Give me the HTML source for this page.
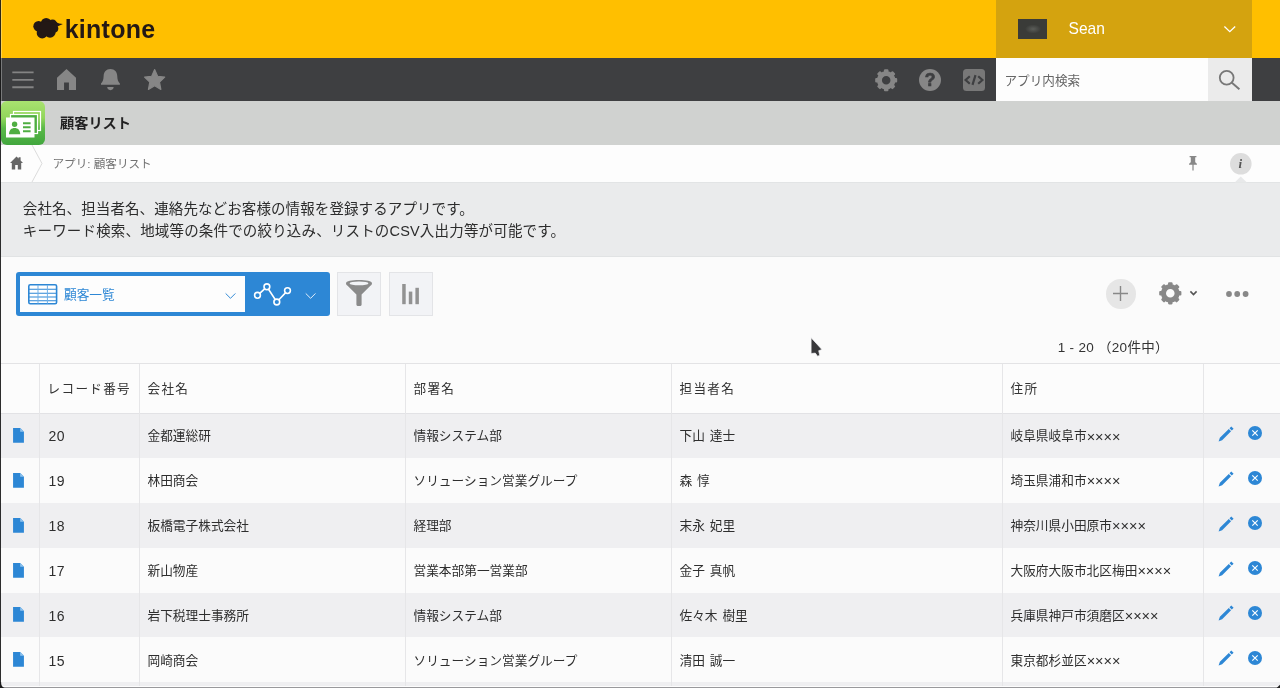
<!DOCTYPE html>
<html lang="ja">
<head>
<meta charset="utf-8">
<title>顧客リスト - kintone</title>
<style>
*{box-sizing:border-box;margin:0;padding:0}
html,body{width:1280px;height:688px;overflow:hidden;background:#fbfbfb}
body{position:relative;font-family:"Liberation Sans","Noto Sans CJK JP",sans-serif;color:#333;font-size:14px}
.abs{position:absolute}
svg{position:absolute;display:block;overflow:visible}
#hdr{left:0;top:0;width:1280px;height:58px;background:#ffbf00}
#user{left:996px;top:0;width:256px;height:58px;background:#d4a30f}
#avatar{left:1018px;top:19px;width:28.7px;height:19.5px;background:radial-gradient(ellipse 8px 4.5px at 52% 50%,#5b5d59 0,#3a3b38 100%)}
#nav{left:0;top:58px;width:1280px;height:43px;background:#3e3f41}
#search{left:996px;top:58px;width:212px;height:43px;background:#fdfdfd}
#sbtn{left:1208px;top:58px;width:44px;height:43px;background:#ebebeb}
#appbar{left:0;top:101px;width:1280px;height:44px;background:#d0d2d0}
#crumb{left:0;top:145px;width:1280px;height:37px;background:#fdfdfd}
#desc{left:0;top:182px;width:1280px;height:75px;background:#eaebec;border-top:1px solid #e2e4e5;border-bottom:1px solid #e1e3e4}
.t{position:absolute;white-space:nowrap;line-height:20px}
#appicon{left:1px;top:101px;width:44px;height:44px;border-radius:6px;background:linear-gradient(180deg,#a9e270 0%,#92d65c 38%,#5ab948 62%,#41a63d 100%)}
#viewsel{left:16px;top:272px;width:314px;height:44px;background:#2d87d5;border-radius:3px}
#viewin{left:20px;top:276px;width:225px;height:35.5px;background:#fdfdfd}
.btn{position:absolute;top:272px;width:44px;height:43.5px;background:#f2f3f6;border:1px solid #e3e4e7}
#plus{left:1106px;top:279px;width:29.5px;height:29.5px;border-radius:50%;background:#e6e6e6}
#thead{left:0;top:363px;width:1280px;height:50px;border-top:1px solid #e3e3e5;background:#fcfcfc}
.th{position:absolute;top:379px;font-size:12.6px;letter-spacing:1.3px;line-height:20px;color:#333;white-space:nowrap}
.row{position:absolute;left:0;width:1280px;height:44.9px;background:#fbfbfb}
.row.g{background:#efeff1}
.c{position:absolute;top:13px;line-height:20px;font-size:12.7px;color:#2e2e2e;white-space:nowrap}
.c1{left:48.4px;font-size:14px;top:13.3px;letter-spacing:.6px}
.c2{left:147.5px}.c3{left:413.5px}.c4{left:679.5px}.c5{left:1010.5px}
.x{font-size:14.5px;line-height:10px;position:relative;top:1.6px}
.c4{word-spacing:1.3px}
.fi{left:12.8px;top:14.9px;width:11px;height:14.8px}
.pen{left:1218px;top:12.85px;width:16px;height:16px}
.del{left:1248px;top:13.2px;width:14px;height:14px}
.vl{position:absolute;top:364px;width:1px;height:324px;background:#e6e6e8}
#app{position:absolute;left:0;top:0;width:1280px;height:688px;will-change:transform}
</style>
</head>
<body>
<div id="app">
<div id="hdr" class="abs"></div>
<div id="user" class="abs"></div>
<div id="avatar" class="abs"></div>
<div id="nav" class="abs"></div>
<div id="search" class="abs"></div>
<div id="sbtn" class="abs"></div>
<div id="appbar" class="abs"></div>
<div id="crumb" class="abs"></div>
<div id="desc" class="abs"></div>

<!-- logo cloud -->
<svg id="cloud" style="left:33px;top:17px;width:30px;height:22px" viewBox="33 17 30 22"><g fill="#231815"><circle cx="38.6" cy="26.3" r="5.3"/><circle cx="46.2" cy="23.3" r="5.4"/><circle cx="52.6" cy="24.2" r="4.6"/><circle cx="42.2" cy="32.9" r="5.5"/><circle cx="50" cy="32" r="5.7"/><circle cx="46.3" cy="28.3" r="7"/><circle cx="54.2" cy="28.6" r="4.1"/><path d="M55.6 21.6C58 23.4 60.4 24 62.9 24L57.4 26.6Z"/></g></svg>
<div class="t" id="logo" style="left:64.7px;top:13.5px;font-size:25px;line-height:30px;font-weight:bold;color:#231815;letter-spacing:0.25px;transform:scaleY(1.06);transform-origin:0 24px">kintone</div>
<div class="t" id="uname" style="left:1068.5px;top:18.5px;font-size:15.6px;color:#fff;transform:scaleY(1.1);transform-origin:0 15.5px">Sean</div>
<svg style="left:1224px;top:25.6px;width:11.6px;height:6.4px" viewBox="0 0 11.6 6.4"><path d="M0.4 0.5L5.8 5.7L11.2 0.5" stroke="#fff" stroke-width="1.3" fill="none"/></svg>

<!-- nav icons -->
<svg style="left:12px;top:71px;width:22px;height:18px" viewBox="0 0 22 18"><path d="M0.3 1.4H21.6M0.3 8.9H21.6M0.3 16.2H21.6" stroke="#848484" stroke-width="1.9" fill="none"/></svg>
<svg style="left:57.2px;top:68.8px;width:19px;height:20.9px" viewBox="0 0 21 21.5" preserveAspectRatio="none"><path d="M10.5 0L21 9V21.5H13.2V14H7.8V21.5H0V9Z" fill="#868686"/></svg>
<svg style="left:101px;top:68.9px;width:18.9px;height:21.2px" viewBox="0 0 20 22" preserveAspectRatio="none"><path d="M10 0C14.6 0 17 3 17.2 7.2C17.4 11 18 13.2 20 15V16.4H0V15C2 13.2 2.600 11 2.800 7.200C3 3 5.400 0 10 0Z M6.600 18.800H13.400C13.400 20.600 12 22 10 22C8 22 6.600 20.600 6.600 18.800Z" fill="#868686"/></svg>
<svg style="left:144px;top:69px;width:21.3px;height:21px" viewBox="-0.25 -0.20 22.50 21.46" preserveAspectRatio="none"><path d="M11.00 0.40L14.17 7.23L21.65 8.14L16.14 13.27L17.58 20.66L11.00 17.00L4.42 20.66L5.86 13.27L0.35 8.14L7.83 7.23Z" fill="#868686" stroke="#868686" stroke-width="1.2" stroke-linejoin="round"/></svg>

<!-- nav right icons -->
<svg id="gear1" style="left:874.8px;top:68.6px;width:22.4px;height:22.4px" viewBox="-12 -12 24 24"><g fill="#868686"><path fill-rule="evenodd" d="M0 -9.9A9.9 9.9 0 1 1 0 9.9A9.9 9.9 0 1 1 0 -9.9ZM0 -4.55A4.55 4.55 0 1 0 0 4.55A4.55 4.55 0 1 0 0 -4.55Z"/><rect transform="rotate(0)" x="-2.4" y="-11.8" width="4.8" height="4" rx="1.1"/><rect transform="rotate(45)" x="-2.4" y="-11.8" width="4.8" height="4" rx="1.1"/><rect transform="rotate(90)" x="-2.4" y="-11.8" width="4.8" height="4" rx="1.1"/><rect transform="rotate(135)" x="-2.4" y="-11.8" width="4.8" height="4" rx="1.1"/><rect transform="rotate(180)" x="-2.4" y="-11.8" width="4.8" height="4" rx="1.1"/><rect transform="rotate(225)" x="-2.4" y="-11.8" width="4.8" height="4" rx="1.1"/><rect transform="rotate(270)" x="-2.4" y="-11.8" width="4.8" height="4" rx="1.1"/><rect transform="rotate(315)" x="-2.4" y="-11.8" width="4.8" height="4" rx="1.1"/></g></svg>
<svg style="left:919px;top:68.8px;width:22px;height:22px" viewBox="0 0 22 22"><circle cx="11" cy="11" r="11" fill="#868686"/><text x="11" y="17.3" text-anchor="middle" style="font:bold 17.5px 'Liberation Sans',sans-serif" fill="#3e3f41" stroke="#3e3f41" stroke-width="0.7">?</text></svg>
<svg style="left:963px;top:69px;width:22px;height:22px" viewBox="0 0 22 22"><rect width="22" height="22" rx="3.5" fill="#787878"/><path d="M6.8 7.2L2.6 11L6.8 14.8M15.2 7.2L19.4 11L15.2 14.8M12.5 6.2L9.5 15.8" stroke="#3e3f41" stroke-width="2.2" fill="none"/></svg>

<div class="t" id="sph" style="left:1004.5px;top:70.6px;font-size:12.6px;color:#666">アプリ内検索</div>
<svg style="left:1218px;top:69px;width:23px;height:22px" viewBox="0 0 23 22"><circle cx="8.7" cy="8.7" r="6.9" stroke="#777" stroke-width="1.8" fill="none"/><path d="M13.6 13.6L21.4 20.2" stroke="#777" stroke-width="2" fill="none"/></svg>

<!-- app bar -->
<div id="appicon" class="abs"></div>
<svg style="left:1px;top:102.6px;width:44px;height:44px" viewBox="0 0 44 44">
<rect x="12.5" y="8.5" width="27" height="19" fill="none" stroke="#fff" stroke-width="1.2"/>
<rect x="9.5" y="11.5" width="27" height="19" fill="#4fae42" stroke="#fff" stroke-width="1.2"/>
<rect x="5" y="14.5" width="28.5" height="20" fill="#fff"/>
<circle cx="13.6" cy="21.2" r="2.7" fill="#4fae42"/>
<path d="M8 31.2C8 27 10.4 25 13.6 25C16.8 25 19.2 27 19.2 31.2Z" fill="#4fae42"/>
<path d="M22 20.2H29.6M22 24.2H29.6M22 28.2H29.6" stroke="#4fae42" stroke-width="1.9" fill="none"/>
</svg>
<div class="t" id="apptitle" style="left:60px;top:113px;font-size:14.2px;font-weight:bold;color:#222">顧客リスト</div>

<!-- breadcrumb -->
<svg style="left:9.5px;top:156.1px;width:13px;height:14px" viewBox="0 0 13 14"><path d="M6.5 0.5L8.6 2.6V1.2H10.6V4.6L13 7H11.2V13.6H7.8V9H5.2V13.6H1.8V7H0Z" fill="#666"/></svg>
<svg style="left:30px;top:145px;width:13px;height:37px" viewBox="0 0 13 37"><path d="M2 0L12 18.5L2 37" stroke="#dcdcdc" stroke-width="1" fill="none"/></svg>
<div class="t" id="crumbt" style="left:52.5px;top:153.9px;font-size:11.6px;color:#727272">アプリ: 顧客リスト</div>
<svg style="left:1189px;top:156.4px;width:8px;height:14.5px" viewBox="0 0 8 14.5"><path d="M0.6 0H7.4V1.2H6.2V6.2C7.2 6.6 8 7.6 8 8.8H4.6V14.5H3.4V8.8H0C0 7.6 0.8 6.6 1.8 6.2V1.2H0.6Z" fill="#888"/></svg>
<svg style="left:1230px;top:152.8px;width:21.6px;height:30px" viewBox="0 0 21.6 30"><circle cx="10.8" cy="10.8" r="10.8" fill="#dddddd"/><path d="M10.8 23.4L17 29.4H4.6Z" fill="#e8e9ea"/><text x="10.4" y="14.8" text-anchor="middle" style="font:italic bold 13px 'Liberation Serif',serif" fill="#555">i</text></svg>

<!-- description -->
<div class="t" id="d1" style="left:22.8px;top:198.5px;font-size:14.5px;letter-spacing:.1px;color:#2c2c2c">会社名、担当者名、連絡先などお客様の情報を登録するアプリです。</div>
<div class="t" id="d2" style="left:22.8px;top:221px;font-size:14.5px;letter-spacing:.17px;color:#2c2c2c">キーワード検索、地域等の条件での絞り込み、リストのCSV入出力等が可能です。</div>

<!-- toolbar -->
<div id="viewsel" class="abs"></div>
<div id="viewin" class="abs"></div>
<svg style="left:27.8px;top:284.4px;width:29.4px;height:20.6px" viewBox="0 0 29.4 20.6"><rect x="0.8" y="0.8" width="27.8" height="19" rx="1.5" fill="#fff" stroke="#2d87d5" stroke-width="1.6"/><path d="M1 5.2H28.4M1 9.2H28.4M1 13H28.4M1 16.8H28.4" stroke="#2d87d5" stroke-width="1.1" fill="none"/><path d="M10 1V19.6M19.4 1V19.6" stroke="#6fb0e8" stroke-width="1" fill="none"/></svg>
<div class="t" id="vname" style="left:64px;top:285px;font-size:12.7px;color:#2d87d5">顧客一覧</div>
<svg style="left:225px;top:292.6px;width:11px;height:6.2px" viewBox="0 0 12 7"><path d="M0.5 0.5L6 6L11.5 0.5" stroke="#2d87d5" stroke-width="1.1" fill="none"/></svg>
<svg style="left:253px;top:282px;width:40px;height:25px" viewBox="253 282 40 25"><path d="M257.5 295.3L266.9 286.8L276.8 302L287.5 290.6" stroke="#fff" stroke-width="1.6" fill="none"/><g fill="#2d87d5" stroke="#fff" stroke-width="1.6"><circle cx="257.5" cy="295.3" r="2.9"/><circle cx="266.9" cy="286.8" r="2.9"/><circle cx="276.8" cy="302" r="2.9"/><circle cx="287.5" cy="290.6" r="2.9"/></g></svg>
<svg style="left:305.3px;top:292.6px;width:11.2px;height:6.2px" viewBox="0 0 12 7"><path d="M0.5 0.5L6 6L11.5 0.5" stroke="#e8f2fb" stroke-width="1.1" fill="none"/></svg>
<div class="btn" style="left:337px"></div>
<div class="btn" style="left:388.5px"></div>
<svg style="left:346px;top:279.6px;width:26px;height:26px" viewBox="0 0 26 26"><path d="M0 3.2C0 1.2 5.8 0 13 0C20.2 0 26 1.2 26 3.2C26 4.2 25.4 5 24.4 5.8L15.6 14.6V24.4C15.6 25.4 14.6 26 13.6 26H12.4C11.4 26 10.4 25.4 10.4 24.4V14.6L1.6 5.8C0.6 5 0 4.2 0 3.2Z" fill="#8a8a8a"/><ellipse cx="13" cy="3.4" rx="9.4" ry="1.9" fill="#f2f3f6"/></svg>
<svg style="left:402px;top:283.6px;width:17px;height:20.2px" viewBox="0 0 17 20.2"><rect x="0.2" y="0" width="3.5" height="20.2" fill="#929292"/><rect x="6.8" y="7.6" width="3.5" height="12.6" fill="#929292"/><rect x="13.4" y="3.8" width="3.5" height="16.4" fill="#929292"/></svg>

<div id="plus" class="abs"></div>
<svg style="left:1113px;top:286.2px;width:15px;height:15px" viewBox="0 0 15 15"><path d="M7.5 0V15M0 7.5H15" stroke="#888" stroke-width="1.4" fill="none"/></svg>
<svg id="gear2" style="left:1159px;top:282px;width:22.6px;height:22.6px" viewBox="-12 -12 24 24"><g fill="#888"><path fill-rule="evenodd" d="M0 -9.9A9.9 9.9 0 1 1 0 9.9A9.9 9.9 0 1 1 0 -9.9ZM0 -4.55A4.55 4.55 0 1 0 0 4.55A4.55 4.55 0 1 0 0 -4.55Z"/><rect transform="rotate(0)" x="-2.4" y="-11.8" width="4.8" height="4" rx="1.1"/><rect transform="rotate(45)" x="-2.4" y="-11.8" width="4.8" height="4" rx="1.1"/><rect transform="rotate(90)" x="-2.4" y="-11.8" width="4.8" height="4" rx="1.1"/><rect transform="rotate(135)" x="-2.4" y="-11.8" width="4.8" height="4" rx="1.1"/><rect transform="rotate(180)" x="-2.4" y="-11.8" width="4.8" height="4" rx="1.1"/><rect transform="rotate(225)" x="-2.4" y="-11.8" width="4.8" height="4" rx="1.1"/><rect transform="rotate(270)" x="-2.4" y="-11.8" width="4.8" height="4" rx="1.1"/><rect transform="rotate(315)" x="-2.4" y="-11.8" width="4.8" height="4" rx="1.1"/></g></svg>
<svg style="left:1189.8px;top:291.3px;width:7px;height:4.4px" viewBox="0 0 7 4.4"><path d="M0.4 0.4L3.5 3.6L6.6 0.4" stroke="#555" stroke-width="1.6" fill="none"/></svg>
<svg style="left:1225.8px;top:290.8px;width:23px;height:6px" viewBox="0 0 23 6"><circle cx="3" cy="3" r="2.9" fill="#888"/><circle cx="11.2" cy="3" r="2.9" fill="#888"/><circle cx="19.6" cy="3" r="2.9" fill="#888"/></svg>
<div class="t" id="pager" style="left:1057.8px;top:337.5px;font-size:13.5px;letter-spacing:0.28px;color:#333">1 - 20 （20件中）</div>

<!-- table header -->
<div id="thead" class="abs"></div>
<div class="th" style="left:47.6px">レコード番号</div>
<div class="th" style="left:147.5px">会社名</div>
<div class="th" style="left:413.5px">部署名</div>
<div class="th" style="left:679.5px">担当者名</div>
<div class="th" style="left:1010.5px">住所</div>
<div id="tbl">
<div class="row g" style="top:413.0px"><svg class="fi" viewBox="0 0 11 15"><path d="M0 0H7.2L11 3.8V15H0Z" fill="#2d87d5"/><path d="M7.2 0V3.8H11Z" fill="#8fc3ee"/></svg><span class="c c1">20</span><span class="c c2">金都運総研</span><span class="c c3">情報システム部</span><span class="c c4">下山 達士</span><span class="c c5">岐阜県岐阜市<span class="x">××××</span></span><svg class="pen" viewBox="0 0 16 16"><path d="M0.6 15.4L1.87 11.87L10.78 2.96L13.05 5.22L4.14 14.13Z M11.49 2.25L13.33 0.41L15.59 2.67L13.75 4.51Z" fill="#2d87d5"/></svg><svg class="del" viewBox="0 0 14 14"><circle cx="7" cy="7" r="7" fill="#2d87d5"/><path d="M4.3 4.3L9.7 9.7M9.7 4.3L4.3 9.7" stroke="#fff" stroke-width="1.15" fill="none"/></svg></div>
<div class="row" style="top:457.9px"><svg class="fi" viewBox="0 0 11 15"><path d="M0 0H7.2L11 3.8V15H0Z" fill="#2d87d5"/><path d="M7.2 0V3.8H11Z" fill="#8fc3ee"/></svg><span class="c c1">19</span><span class="c c2">林田商会</span><span class="c c3">ソリューション営業グループ</span><span class="c c4">森 惇</span><span class="c c5">埼玉県浦和市<span class="x">××××</span></span><svg class="pen" viewBox="0 0 16 16"><path d="M0.6 15.4L1.87 11.87L10.78 2.96L13.05 5.22L4.14 14.13Z M11.49 2.25L13.33 0.41L15.59 2.67L13.75 4.51Z" fill="#2d87d5"/></svg><svg class="del" viewBox="0 0 14 14"><circle cx="7" cy="7" r="7" fill="#2d87d5"/><path d="M4.3 4.3L9.7 9.7M9.7 4.3L4.3 9.7" stroke="#fff" stroke-width="1.15" fill="none"/></svg></div>
<div class="row g" style="top:502.8px"><svg class="fi" viewBox="0 0 11 15"><path d="M0 0H7.2L11 3.8V15H0Z" fill="#2d87d5"/><path d="M7.2 0V3.8H11Z" fill="#8fc3ee"/></svg><span class="c c1">18</span><span class="c c2">板橋電子株式会社</span><span class="c c3">経理部</span><span class="c c4">末永 妃里</span><span class="c c5">神奈川県小田原市<span class="x">××××</span></span><svg class="pen" viewBox="0 0 16 16"><path d="M0.6 15.4L1.87 11.87L10.78 2.96L13.05 5.22L4.14 14.13Z M11.49 2.25L13.33 0.41L15.59 2.67L13.75 4.51Z" fill="#2d87d5"/></svg><svg class="del" viewBox="0 0 14 14"><circle cx="7" cy="7" r="7" fill="#2d87d5"/><path d="M4.3 4.3L9.7 9.7M9.7 4.3L4.3 9.7" stroke="#fff" stroke-width="1.15" fill="none"/></svg></div>
<div class="row" style="top:547.7px"><svg class="fi" viewBox="0 0 11 15"><path d="M0 0H7.2L11 3.8V15H0Z" fill="#2d87d5"/><path d="M7.2 0V3.8H11Z" fill="#8fc3ee"/></svg><span class="c c1">17</span><span class="c c2">新山物産</span><span class="c c3">営業本部第一営業部</span><span class="c c4">金子 真帆</span><span class="c c5">大阪府大阪市北区梅田<span class="x">××××</span></span><svg class="pen" viewBox="0 0 16 16"><path d="M0.6 15.4L1.87 11.87L10.78 2.96L13.05 5.22L4.14 14.13Z M11.49 2.25L13.33 0.41L15.59 2.67L13.75 4.51Z" fill="#2d87d5"/></svg><svg class="del" viewBox="0 0 14 14"><circle cx="7" cy="7" r="7" fill="#2d87d5"/><path d="M4.3 4.3L9.7 9.7M9.7 4.3L4.3 9.7" stroke="#fff" stroke-width="1.15" fill="none"/></svg></div>
<div class="row g" style="top:592.6px"><svg class="fi" viewBox="0 0 11 15"><path d="M0 0H7.2L11 3.8V15H0Z" fill="#2d87d5"/><path d="M7.2 0V3.8H11Z" fill="#8fc3ee"/></svg><span class="c c1">16</span><span class="c c2">岩下税理士事務所</span><span class="c c3">情報システム部</span><span class="c c4">佐々木 樹里</span><span class="c c5">兵庫県神戸市須磨区<span class="x">××××</span></span><svg class="pen" viewBox="0 0 16 16"><path d="M0.6 15.4L1.87 11.87L10.78 2.96L13.05 5.22L4.14 14.13Z M11.49 2.25L13.33 0.41L15.59 2.67L13.75 4.51Z" fill="#2d87d5"/></svg><svg class="del" viewBox="0 0 14 14"><circle cx="7" cy="7" r="7" fill="#2d87d5"/><path d="M4.3 4.3L9.7 9.7M9.7 4.3L4.3 9.7" stroke="#fff" stroke-width="1.15" fill="none"/></svg></div>
<div class="row" style="top:637.5px"><svg class="fi" viewBox="0 0 11 15"><path d="M0 0H7.2L11 3.8V15H0Z" fill="#2d87d5"/><path d="M7.2 0V3.8H11Z" fill="#8fc3ee"/></svg><span class="c c1">15</span><span class="c c2">岡崎商会</span><span class="c c3">ソリューション営業グループ</span><span class="c c4">清田 誠一</span><span class="c c5">東京都杉並区<span class="x">××××</span></span><svg class="pen" viewBox="0 0 16 16"><path d="M0.6 15.4L1.87 11.87L10.78 2.96L13.05 5.22L4.14 14.13Z M11.49 2.25L13.33 0.41L15.59 2.67L13.75 4.51Z" fill="#2d87d5"/></svg><svg class="del" viewBox="0 0 14 14"><circle cx="7" cy="7" r="7" fill="#2d87d5"/><path d="M4.3 4.3L9.7 9.7M9.7 4.3L4.3 9.7" stroke="#fff" stroke-width="1.15" fill="none"/></svg></div>
<div class="row g" style="top:682.4px"></div>
</div>
<div class="abs" style="left:0;top:412.6px;width:1280px;height:1px;background:#e2e2e5"></div>
<div class="vl" style="left:39px"></div>
<div class="vl" style="left:139px"></div>
<div class="vl" style="left:405px"></div>
<div class="vl" style="left:671px"></div>
<div class="vl" style="left:1002px"></div>
<div class="vl" style="left:1203px"></div>
<!-- mouse cursor -->
<svg style="left:805px;top:335px;width:20px;height:24px" viewBox="805 335 20 24"><path d="M811.1 337.7V353.5L815.3 353.1L817.6 356.3L819.7 355.3L818.7 350.7L821.9 349.5Z" fill="#38383a" stroke="#f4f4f6" stroke-width="0.7" stroke-linejoin="round"/></svg>
<!-- window frame -->
<div class="abs" style="left:0;top:0;width:1.1px;height:688px;background:rgba(22,22,22,.9)"></div>
<div class="abs" style="left:1.1px;top:0;width:1px;height:101px;background:rgba(255,255,255,.3)"></div>
<div class="abs" style="left:0;top:685.8px;width:1280px;height:1px;background:#fdfdfd"></div>
<div class="abs" style="left:0;top:686.8px;width:1280px;height:1.2px;background:#99999c"></div>
<svg style="left:0;top:682px;width:6px;height:6px" viewBox="0 0 6 6"><path d="M0 0V6H6C2.4 6 1.1 3.6 1.1 0Z" fill="#1c1c1c"/></svg>
<svg style="left:1276px;top:684px;width:4px;height:4px" viewBox="0 0 4 4"><path d="M4 0.8V4H0.6Z" fill="#222"/></svg>
</div>
</body>
</html>
